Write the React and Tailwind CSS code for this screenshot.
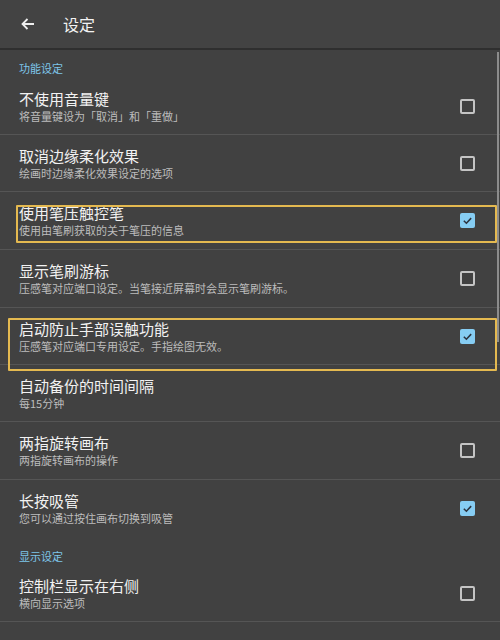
import React from "react";

const font = { fontFamily: '"Noto Sans CJK SC", "Noto Sans", sans-serif' };

function Check({ checked }) {
  if (checked) {
    return (
      <div className="w-[15px] h-[15px] rounded-[2px] bg-[#86cdf3] flex items-center justify-center">
        <svg width="11" height="11" viewBox="0 0 12 12">
          <path d="M2 6.3 L4.8 9 L10 3.4" fill="none" stroke="#2c3440" strokeWidth="1.7" />
        </svg>
      </div>
    );
  }
  return <div className="w-[15px] h-[15px] rounded-[2px] border-2 border-[#c4c4c4]" />;
}

function Row({ title, sub, check, divider = true, box, h = "h-[57px]" }) {
  return (
    <div className={`relative ${h} flex items-center pl-[19px] pr-[25px] ${divider ? "border-b border-[#555555]" : ""}`}>
      <div className="flex-1 flex flex-col gap-[1px]">
        <div className="text-[15px] leading-[18px] text-[#f2f2f2]">{title}</div>
        <div className="text-[11px] leading-[14px] text-[#bdbdbd]">{sub}</div>
      </div>
      {check !== undefined && <Check checked={check} />}
      {box}
    </div>
  );
}

function Section({ label, h = "h-[28px]" }) {
  return (
    <div className={`${h} flex items-end pl-[19px] pb-[3px]`}>
      <div className="text-[11px] leading-[14px] text-[#7ec6ea]">{label}</div>
    </div>
  );
}

export default function App() {
  return (
    <div className="w-[500px] h-[640px] overflow-hidden bg-[#414141] relative" style={font}>
      <div className="h-[50px] bg-[#434343] flex items-center border-b-2 border-[#2f2f2f]">
        <svg width="16" height="16" viewBox="0 0 16 16" className="ml-[20px]">
          <path d="M14 8 H2.5 M7.5 3 L2.5 8 L7.5 13" fill="none" stroke="#eeeeee" strokeWidth="1.8" />
        </svg>
        <div className="ml-[27px] text-[16px] text-[#f2f2f2]">设定</div>
      </div>
      <Section label="功能设定" />
      <Row title="不使用音量键" sub="将音量键设为「取消」和「重做」" check={false} />
      <Row title="取消边缘柔化效果" sub="绘画时边缘柔化效果设定的选项" check={false} />
      <Row
        h="h-[58px]"
        title="使用笔压触控笔"
        sub="使用由笔刷获取的关于笔压的信息"
        check={true}
        box={<div className="absolute left-[16px] right-[3px] top-[13px] h-[38px] border-2 border-[#e4b950] rounded-[1px]" />}
      />
      <Row h="h-[58px]" title="显示笔刷游标" sub="压感笔对应端口设定。当笔接近屏幕时会显示笔刷游标。" check={false} />
      <Row
        title="启动防止手部误触功能"
        sub="压感笔对应端口专用设定。手指绘图无效。"
        check={true}
        box={<div className="absolute left-[8px] right-[3px] top-[10px] h-[53px] border-2 border-[#e4b950] rounded-[1px] z-10" />}
      />
      <Row title="自动备份的时间间隔" sub="每15分钟" />
      <Row h="h-[58px]" title="两指旋转画布" sub="两指旋转画布的操作" check={false} />
      <Row title="长按吸管" sub="您可以通过按住画布切换到吸管" check={true} divider={false} />
      <Section label="显示设定" h="h-[29px]" />
      <Row h="h-[56px]" title="控制栏显示在右侧" sub="横向显示选项" check={false} />
      <div className="absolute right-[1px] top-[52px] w-[2px] h-[290px] bg-[#8c8c8c]" />
    </div>
  );
}
